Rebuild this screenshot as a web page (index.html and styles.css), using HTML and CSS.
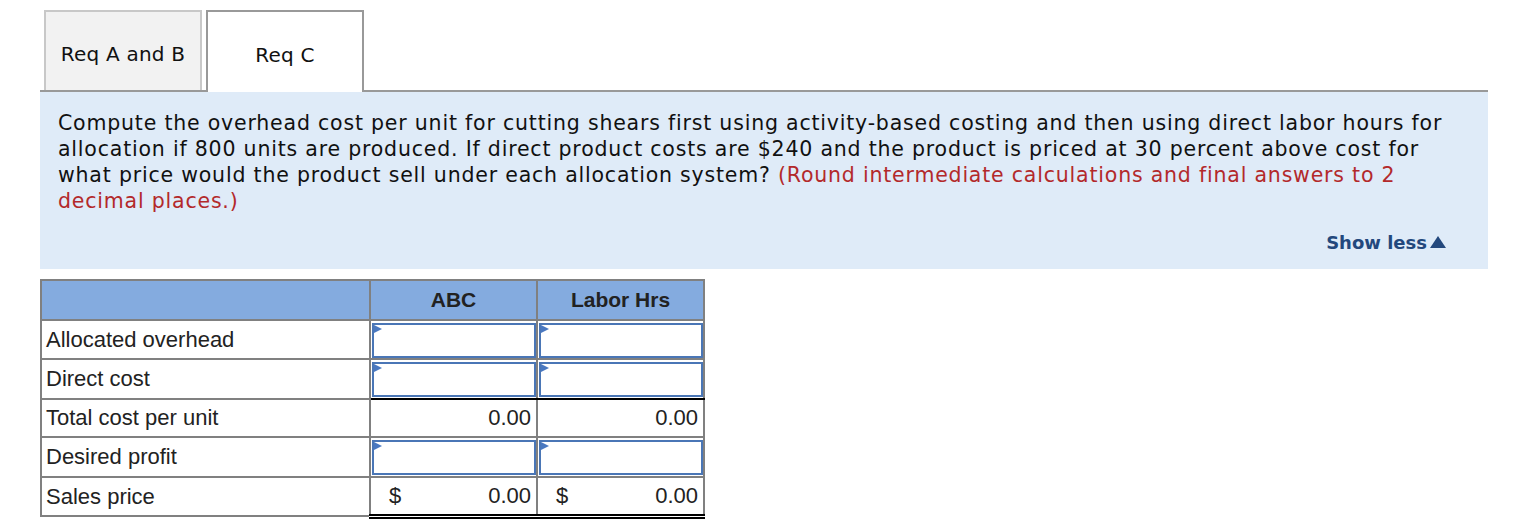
FILE: index.html
```html
<!DOCTYPE html>
<html lang="en">
<head>
    <meta charset="UTF-8">
    <title>Req C</title>
    <link rel="stylesheet" href="styles.css">
</head>
<body>
    <div id="page">
        <div class="tabs">
            <button class="tab">Req A and B</button>
            <button class="tab active">Req C</button>
        </div>
        <div class="panel">
            <p class="question">Compute the overhead cost per unit for cutting shears first using activity-based costing and then using direct labor hours for<br>
            allocation if 800 units are produced. If direct product costs are $240 and the product is priced at 30 percent above cost for<br>
            what price would the product sell under each allocation system? <span class="note">(Round intermediate calculations and final answers to 2<br>
            decimal places.)</span></p>
            <div class="show-less">Show less<span class="arrow"></span></div>
        </div>
        <table class="grid">
            <tr class="head">
                <th class="label-col"></th>
                <th>ABC</th>
                <th>Labor Hrs</th>
            </tr>
            <tr>
                <td class="label">Allocated overhead</td>
                <td class="input-cell"><div class="entry"></div></td>
                <td class="input-cell"><div class="entry"></div></td>
            </tr>
            <tr>
                <td class="label">Direct cost</td>
                <td class="input-cell sum-line"><div class="entry"></div></td>
                <td class="input-cell sum-line"><div class="entry"></div></td>
            </tr>
            <tr>
                <td class="label">Total cost per unit</td>
                <td class="num">0.00</td>
                <td class="num">0.00</td>
            </tr>
            <tr>
                <td class="label">Desired profit</td>
                <td class="input-cell"><div class="entry"></div></td>
                <td class="input-cell"><div class="entry"></div></td>
            </tr>
            <tr>
                <td class="label">Sales price</td>
                <td class="num total"><span class="cur">$</span>0.00</td>
                <td class="num total"><span class="cur">$</span>0.00</td>
            </tr>
        </table>
    </div>
</body>
</html>
```

FILE: styles.css
```css
body, html {
    margin: 0;
    padding: 0;
    background: white;
}

#page {
    padding: 10px 0 0 40px;
    width: 1448px;
}

.tabs {
    display: flex;
    gap: 4px;
    padding-left: 4px;
    border-bottom: 2px solid #999;
    height: 80px;
    align-items: flex-start;
}

.tab {
    box-sizing: border-box;
    width: 158px;
    height: 80px;
    padding-top: 6px;
    background: #f2f2f2;
    border: 2px solid #c8c8c8;
    border-bottom: none;
    font-family: "DejaVu Sans", Verdana, sans-serif;
    font-size: 20px;
    letter-spacing: 0.2px;
    color: #111;
    cursor: pointer;
}

.tab.active {
    background: white;
    border-color: #999;
    height: 82px;
}

.panel {
    background: #dfebf8;
    padding: 18px 42px 16px 18px;
}

.question {
    margin: 0;
    font-family: "DejaVu Sans", Verdana, sans-serif;
    font-size: 20.5px;
    letter-spacing: 0.8px;
    line-height: 26px;
    white-space: nowrap;
    color: #111;
}

.note {
    color: #b3292b;
}

.show-less {
    display: flex;
    justify-content: flex-end;
    align-items: center;
    gap: 3px;
    margin-top: 18px;
    font-family: "DejaVu Sans", Verdana, sans-serif;
    font-weight: bold;
    font-size: 18px;
    color: #23487d;
    cursor: pointer;
}

.arrow {
    width: 0;
    height: 0;
    border-left: 8px solid transparent;
    border-right: 8px solid transparent;
    border-bottom: 12px solid #23487d;
    margin-top: -2px;
}

.grid {
    margin-top: 10px;
    border-collapse: collapse;
    border: 2px solid #808080;
    font-family: "Liberation Sans", Arial, sans-serif;
    font-size: 22px;
    color: #222;
}

.grid th, .grid td {
    border: 2px solid #808080;
    height: 36.4px;
    padding: 0;
}

.grid .head th {
    background: #84abdf;
    height: 38px;
    font-weight: bold;
    font-size: 21px;
    text-align: center;
    width: 165px;
}

.grid .head th.label-col {
    width: 327px;
}

.label {
    padding: 0 4px !important;
}

.input-cell {
    padding: 1px 0 0 1px !important;
}

.entry {
    position: relative;
    box-sizing: border-box;
    height: 35px;
    border: 2px solid #4a76b6;
    background: white;
}

.entry::before {
    content: "";
    position: absolute;
    top: 0;
    left: 0;
    border-top: 4px solid transparent;
    border-bottom: 4px solid transparent;
    border-left: 8px solid #4a78c0;
}

.grid td.sum-line {
    border-bottom: 2px solid #000;
}

.num {
    text-align: right;
    padding: 0 5px 0 0 !important;
}

.cur {
    float: left;
    padding-left: 18px;
}

.grid td.total {
    border-bottom: 5px double #000;
}
```
